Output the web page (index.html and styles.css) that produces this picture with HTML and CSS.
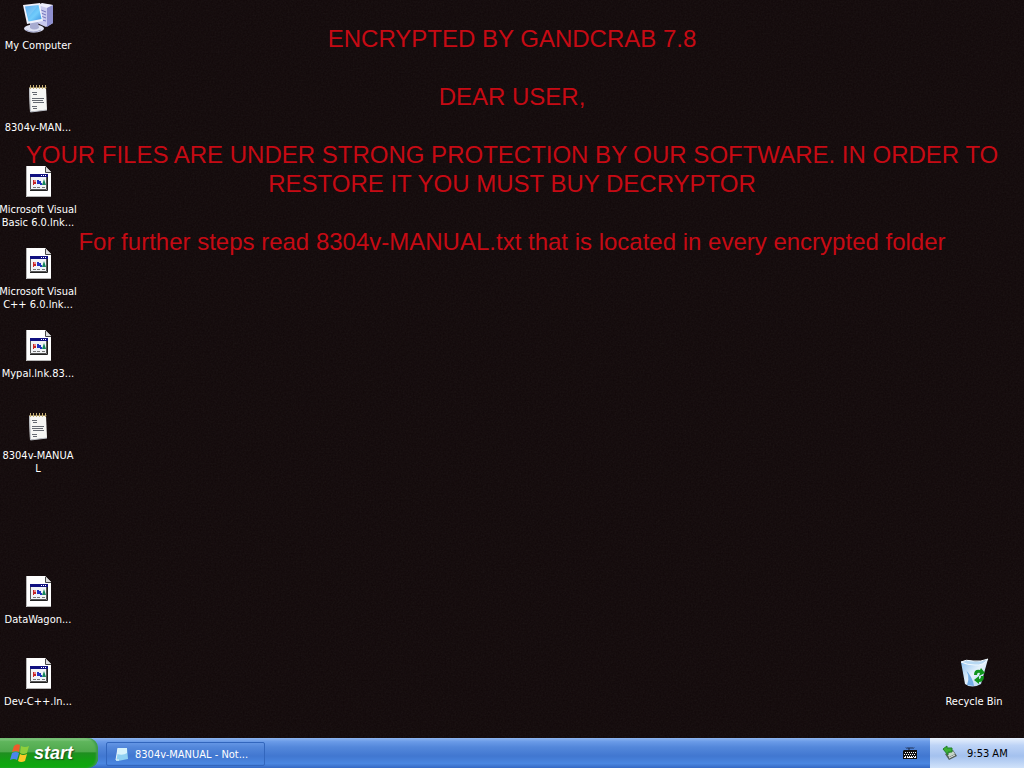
FILE: index.html
```html
<!DOCTYPE html>
<html lang="en">
<head>
    <meta charset="UTF-8">
    <title>Desktop</title>
    <link rel="stylesheet" href="styles.css">
</head>
<body>
<svg class="defs" aria-hidden="true">
    <defs>
        <linearGradient id="screen" x1="0" y1="0" x2="1" y2="1">
            <stop offset="0" stop-color="#3f9cec"/>
            <stop offset=".6" stop-color="#72ccfb"/>
            <stop offset="1" stop-color="#3c93e2"/>
        </linearGradient>
        <linearGradient id="bin" x1="0" y1="0" x2="1" y2="1">
            <stop offset="0" stop-color="#86bdf0"/>
            <stop offset=".5" stop-color="#e4f1fb"/>
            <stop offset="1" stop-color="#a9cdee"/>
        </linearGradient>
        <filter id="noise" x="0" y="0" width="100%" height="100%">
            <feTurbulence type="fractalNoise" baseFrequency=".6" numOctaves="2"/>
            <feColorMatrix type="saturate" values=".4"/>
        </filter>
        <symbol id="computer" viewBox="0 0 32 32">
            <path d="M20 2l11 1v18l-7 4-9-4V4z" fill="#c9caee"/>
            <path d="M20 1l11 2-6 3-9-3z" fill="#eeeefb"/>
            <path d="M25 6l6-3v18l-6 4z" fill="#8f90cf"/>
            <path d="M19 8l5 2M19 11l5 2M19 14l5 2M20 18l4 1" stroke="#7475bd"/>
            <ellipse cx="12" cy="26.500" rx="10" ry="4" fill="#dfe2f3"/>
            <path d="M4 28q7 4 15 0" fill="none" stroke="#a0a4c8"/>
            <path d="M8 20h8l1 6q-5 3-9 0z" fill="#a8acd0"/>
            <path d="M1 3l17-2 3 18-16 3z" fill="#eef1fc"/>
            <path d="M3 4.500l13.500-1.500 3 14-13 2.500z" fill="url(#screen)"/>
            <path d="M3 4.500l13.500-1.500-10 12z" fill="#fff" opacity=".15"/>
        </symbol>
        <symbol id="notepad" viewBox="0 0 32 32">
            <path d="M7 3h17l1 23-17 2z" fill="#f6f6f4"/>
            <path d="M7.500 3l1 25 16.500-2" fill="none" stroke="#b9bdc4"/>
            <path d="M7 3.500h17.500" stroke="#8a7c56"/>
            <path d="M8.500 1v4M11.500 1v4M14.500 1v4M17.500 1v4M20.500 1v4M23.500 1v4" stroke="#c8b176"/>
            <path d="M10 8.500h5M11 10.500h4M10 14.500h12M10 16.500h11M11 18.500h11M10 22.500h5M11 24.500h4" stroke="#666a72"/>
        </symbol>
        <symbol id="file" viewBox="0 0 32 32">
            <path d="M4 0h19l6 6v25H4z" fill="#fff"/>
            <path d="M4.500 0v30.500H29" fill="none" stroke="#b5b5b5"/>
            <path d="M23 0l6 6h-6z" fill="#dcdcdc"/>
            <path d="M23.500 1v5.500H29" fill="none" stroke="#444"/>
            <path d="M8.500 8.500h16v15h-16z" fill="#f1f3f6" stroke="#555"/>
            <path d="M8 24.500h17.500V9" fill="none" stroke="#222"/>
            <path d="M8 8h18v3H8z" fill="#101080"/>
            <path d="M19 9.500h1M21 9.500h1M23 9.500h1" stroke="#fff"/>
            <path d="M11 14h3v4h-2v1h-1z" fill="#c62626"/>
            <path d="M12 14h2v2h-2z" fill="#e88"/>
            <path d="M15 14h2v1h2v2h1v2h-2v-1h-3z" fill="#2233c0"/>
            <path d="M22 13l2 6h-4z" fill="#15875c"/>
            <path d="M11 21.500h3M15 21.500h3M20 21.500h3" stroke="#777"/>
        </symbol>
        <symbol id="recycle" viewBox="0 0 32 32">
            <path d="M3 4l4 22q7 5 16 0l7-25q-7 6-14 3-7-3-13 0z" fill="url(#bin)"/>
            <path d="M3 4q5-3 12-1 8 1 15-2-5 7-13 6-8 0-14-3z" fill="#b8d9f3" stroke="#f2faff"/>
            <path d="M6 10q7 6 3 17l7 1q-1-9-10-18z" fill="#75aee7"/>
            <path d="M16 17q0-6 6-5l1-2 4 5-6 3 1-3q-3-1-3 2z" fill="#10951c"/>
            <path d="M26 18q0 6-5 6v2l-5-4 5-4v3q2 0 2-3z" fill="#10951c"/>
        </symbol>
    </defs>
</svg>
<main class="desktop">
    <svg class="grain" aria-hidden="true"><rect width="100%" height="100%" filter="url(#noise)"/></svg>
    <div class="wallpaper">
        <p>ENCRYPTED BY GANDCRAB 7.8</p>
        <p>DEAR USER,</p>
        <p>YOUR FILES ARE UNDER STRONG PROTECTION BY OUR SOFTWARE. IN ORDER TO<br>RESTORE IT YOU MUST BUY DECRYPTOR</p>
        <p>For further steps read 8304v-MANUAL.txt that is located in every encrypted folder</p>
    </div>
    <div class="icons">
        <button class="icon"><svg><use href="#computer"/></svg><span>My Computer</span></button>
        <button class="icon"><svg><use href="#notepad"/></svg><span>8304v-MAN...</span></button>
        <button class="icon"><svg><use href="#file"/></svg><span>Microsoft Visual<br>Basic 6.0.lnk...</span></button>
        <button class="icon"><svg><use href="#file"/></svg><span>Microsoft Visual<br>C++ 6.0.lnk...</span></button>
        <button class="icon"><svg><use href="#file"/></svg><span>Mypal.lnk.83...</span></button>
        <button class="icon"><svg><use href="#notepad"/></svg><span>8304v-MANUA<br>L</span></button>
        <button class="icon row-8"><svg><use href="#file"/></svg><span>DataWagon...</span></button>
        <button class="icon row-9"><svg><use href="#file"/></svg><span>Dev-C++.ln...</span></button>
        <button class="icon row-9 recycle"><svg><use href="#recycle"/></svg><span>Recycle Bin</span></button>
    </div>
</main>
<footer class="taskbar">
    <button class="start">
        <svg class="flag" viewBox="0 0 20 20">
            <path d="M4 3q3-3 6-1L9 9q-3-2-7 0z" fill="#ef5b2b"/>
            <path d="M11 3q4 2 8 0l-2 7q-4 2-7 0z" fill="#8fcf3c"/>
            <path d="M2 10q4-2 7 0l-2 7q-3-2-7 0z" fill="#4a86ea"/>
            <path d="M10 11q3 2 7 0l-2 7q-4 2-7 0z" fill="#fbc927"/>
        </svg>
        <span>start</span>
    </button>
    <button class="task">
        <svg viewBox="0 0 16 16">
            <path d="M4 2h9l1 11-10 2H2z" fill="#8fd0f2"/>
            <path d="M4 2h9v5q-4 3-10 1z" fill="#d7f3fc"/>
            <path d="M4 2L2 14h3" fill="none" stroke="#e8f6fb"/>
        </svg>
        <span>8304v-MANUAL - Not...</span>
    </button>
    <button class="keyboard" aria-label="Keyboard">
        <svg viewBox="0 0 16 16">
            <path d="M4 2.500l1 1 1-1 1 1 1-1 1 1 1-1 1 1 1-1M7 3v3" fill="none" stroke="#182440"/>
            <path d="M2 5h13v9H1V6z" fill="#111"/>
            <path d="M3 7.500h11M2 9.500h12M3 11.500h11" stroke="#fff" stroke-dasharray="1 1"/>
            <path d="M2 12.500h2M5 12.500h6M12 12.500h2" stroke="#fff"/>
        </svg>
    </button>
    <div class="tray">
        <svg viewBox="0 0 16 16">
            <path d="M3 9l8-4 4 6-8 4z" fill="#53605a"/>
            <path d="M5 9l6-3 2 3-6 3z" fill="#c6d5ca"/>
            <path d="M7 13l6-3" stroke="#eee"/>
            <path d="M1 4l4-3v2h5v4H6v3z" fill="#3caf32" stroke="#22812a"/>
        </svg>
        <time>9:53 AM</time>
    </div>
</footer>
</body>
</html>
```
FILE: styles.css
```css
*{
    margin: 0;
    padding: 0;
    box-sizing: border-box;
}
body{
    min-height: 100vh;
    display: flex;
    flex-direction: column;
    background: #110809;
    font: 11px/13px "DejaVu Sans Condensed", Tahoma, sans-serif;
    overflow: hidden;
}
button{
    border: none;
    background: none;
    font: inherit;
    color: #fff;
}
svg{
    display: block;
    flex: none;
}
.defs{
    position: absolute;
    width: 0;
    height: 0;
}

/* desktop */
.desktop{
    flex: 1;
    position: relative;
}
.grain{
    position: absolute;
    width: 100%;
    height: 100%;
    opacity: .06;
}
.wallpaper{
    position: absolute;
    top: 24px;
    left: 0;
    right: 0;
    text-align: center;
    color: #c60a14;
    font: 24px/29px "Liberation Sans", Arial, sans-serif;
    white-space: nowrap;
}
.wallpaper p{
    margin-bottom: 29px;
}
.icons{
    position: relative;
    display: grid;
    grid-template-columns: 76px 76px;
    grid-auto-rows: 82px;
    justify-content: space-between;
    padding-right: 12px;
}
.icon{
    grid-column: 1;
    display: flex;
    flex-direction: column;
    align-items: center;
    gap: 5px;
    padding-top: 2px;
    white-space: nowrap;
}
.icon svg{
    width: 32px;
    height: 32px;
}
.row-8{
    grid-row: 8;
}
.row-9{
    grid-row: 9;
}
.recycle{
    grid-column: 2;
}

/* taskbar */
.taskbar{
    height: 30px;
    display: flex;
    align-items: stretch;
    background: linear-gradient(#8db5ef, #6a9be8 12%, #5488db 30%, #4177d0 60%, #4a86e0 85%, #3569c4);
}
.start{
    width: 98px;
    display: flex;
    align-items: center;
    gap: 4px;
    padding-left: 10px;
    border-radius: 0 10px 10px 0;
    background: linear-gradient(#8fcf8b, #5fb55c 12%, #4fa94c 45%, #1f8f20 50%, #12a012 75%, #0cab0c);
    box-shadow: inset -2px 0 2px #3d9a4a;
    font: italic bold 18px/20px "Liberation Sans", Arial, sans-serif;
    text-shadow: 1px 1px 1px #1f4f1f;
}
.flag{
    width: 20px;
    height: 20px;
}
.task{
    width: 159px;
    display: flex;
    align-items: center;
    gap: 5px;
    margin: 4px auto 2px 8px;
    padding-left: 7px;
    border: 1px solid #3266bd;
    border-radius: 2px;
}
.task svg, .keyboard svg, .tray svg{
    width: 16px;
    height: 16px;
}
.keyboard{
    padding: 0 12px;
}
.tray{
    width: 94px;
    display: flex;
    align-items: center;
    gap: 9px;
    padding-left: 12px;
    background: linear-gradient(#e8f1fd, #bdd3f6 25%, #a4c1ee 60%, #d0e2fa);
}
```
